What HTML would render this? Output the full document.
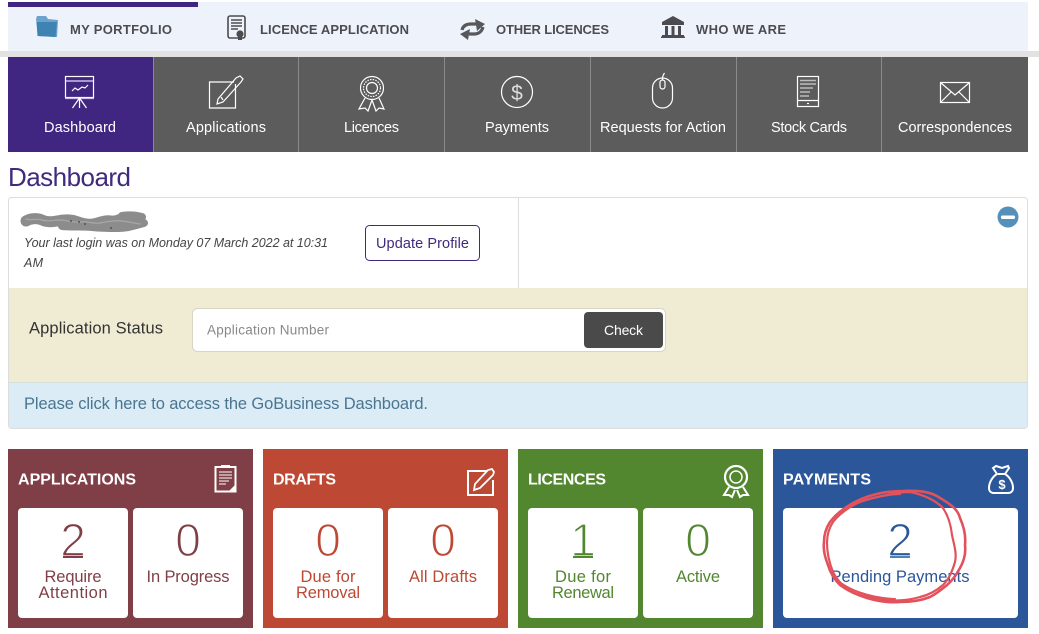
<!DOCTYPE html>
<html><head><meta charset="utf-8"><title>Dashboard</title>
<style>
html,body{margin:0;padding:0;background:#fff;width:1039px;height:634px;overflow:hidden}
svg{display:block;font-family:"Liberation Sans",sans-serif}
.top{font-size:13px;font-weight:bold;fill:#4c4c50}
.nav{font-size:14.500px;fill:#fff}
.i{fill:none;stroke:#fff;stroke-width:1.2}
.h{font-size:16px;font-weight:bold;fill:#fff}
.n{font-size:46px;text-anchor:middle;stroke:#fff;stroke-width:1.3}
.l{font-size:16.500px;text-anchor:middle}
</style></head><body>
<svg width="1039" height="634" viewBox="0 0 1039 634" xmlns="http://www.w3.org/2000/svg">
<rect width="1039" height="634" fill="#fff"/>
<!-- top bar -->
<rect x="8" y="2" width="1020" height="49" fill="#eef3fb"/>
<rect x="8" y="2" width="190" height="5" fill="#412681"/>
<rect x="0" y="51" width="1039" height="6" fill="#e2e2e2"/>
<path d="M36 19l1-3h9l2 3 10 1-1 17-19-1z" fill="#6aa3cb"/>
<path d="M36.500 22l20.500 0-1.500 15-18-1z" fill="#3f83b2"/>
<text class="top" x="70" y="34" textLength="102">MY PORTFOLIO</text>
<rect x="228" y="16" width="17" height="22" rx="2" fill="none" stroke="#4c4c50" stroke-width="1.6"/>
<path d="M231 20h11M231 23h11M231 26h11M231 29h7" stroke="#4c4c50" stroke-width="1.4"/>
<circle cx="240" cy="34" r="3.6" fill="#4c4c50"/><rect x="238" y="36" width="4" height="4" fill="#4c4c50"/>
<text class="top" x="260" y="34" textLength="149">LICENCE APPLICATION</text>
<path d="M462 30c1-4 4-6 9-6h5M483 27c-1 4-4 7-9 7h-5" fill="none" stroke="#58585c" stroke-width="3.200"/>
<path d="M475 19l10 5-8 7zM470 29l-10 5 8 6z" fill="#58585c"/>
<text class="top" x="496" y="34" textLength="113">OTHER LICENCES</text>
<path d="M673 16l11 6v1h-22v-1z" fill="#4c4c50"/>
<rect x="662" y="23" width="22" height="2" fill="#4c4c50"/>
<path d="M665 26h3v9h-3zM671.500 26h3v9h-3zM678 26h3v9h-3z" fill="#4c4c50"/>
<rect x="662" y="35" width="22" height="2" fill="#4c4c50"/>
<rect x="661" y="36.500" width="24" height="1.500" fill="#4c4c50"/>
<text class="top" x="696" y="34" textLength="90">WHO WE ARE</text>
<!-- nav -->
<rect x="8" y="57" width="1020" height="95" fill="#5c5c5c"/>
<rect x="8" y="57" width="145" height="95" fill="#412681"/>
<path d="M153.500 57v95M298.500 57v95M444.500 57v95M590.500 57v95M736.500 57v95M881.500 57v95" stroke="#8a8a8a" stroke-width="1"/>
<text class="nav" x="44" y="132" textLength="72">Dashboard</text>
<text class="nav" x="186" y="132" textLength="80">Applications</text>
<text class="nav" x="344" y="132" textLength="55">Licences</text>
<text class="nav" x="485" y="132" textLength="64">Payments</text>
<text class="nav" x="600" y="132" textLength="126">Requests for Action</text>
<text class="nav" x="771" y="132" textLength="76">Stock Cards</text>
<text class="nav" x="898" y="132" textLength="114">Correspondences</text>
<!-- nav icons -->
<g class="i">
<rect x="65.500" y="76.500" width="28" height="21"/>
<path d="M66 81h27" stroke="#c9bfe6" stroke-width="1.500"/>
<path d="M72 91l3-3 3 2 4-3 3 1 3-3"/>
<path d="M65 98.500h29" stroke="#c9bfe6"/>
<path d="M79.500 98v10M79.500 98l-7 10M79.500 98l7 10"/>
<path d="M234 82h-24.500v26h26v-24" />
<path d="M218 99l18-21 4-2 3 3-2 3-18 20-6 2z"/>
<path d="M221 97l2 3"/>
<circle cx="372" cy="88" r="11.500"/>
<circle cx="372" cy="88" r="8.500" stroke-dasharray="1.500 1.200"/>
<circle cx="372" cy="88" r="5.500"/>
<path d="M365 98l-6 11 6-1 3 3 4-11 4 11 3-3 5 1-5-11"/>
<circle cx="517" cy="92" r="15.500"/>
<text x="517" y="100" font-size="21" text-anchor="middle" fill="#ddd" stroke="none">$</text>
<rect x="652.500" y="78" width="20" height="30" rx="10"/>
<rect x="660" y="80" width="5" height="9" rx="2.500"/>
<path d="M662.500 80c0-3 0-4 2-7" />
<rect x="797.500" y="76.500" width="21" height="30"/>
<path d="M797.500 100.500h21" />
<path d="M800 80.500h16M800 84h16" stroke="#bbb" stroke-width="1.400"/>
<path d="M800 88h13M800 92h10M800 96h9" stroke="#ccc"/>
<path d="M807 103.500h2" stroke-width="1.200"/>
<rect x="940.500" y="82.500" width="29" height="20"/>
<path d="M941 83l14 12 14-12M941 102l10-10M969 102l-10-10"/>
</g>
<!-- heading -->
<text x="8" y="186" font-size="26" fill="#412a7d" textLength="123">Dashboard</text>
<!-- panel -->
<rect x="8.500" y="197.500" width="1019" height="231" rx="3" fill="#fff" stroke="#ddd"/>
<path d="M518.500 198v90" stroke="#ddd"/>
<rect x="9" y="288" width="1018" height="94" fill="#f0ecd4"/>
<path d="M9 382.500h1018" stroke="#d5dfdf"/>
<path d="M9 383h1018v43a2 2 0 0 1-2 2H11a2 2 0 0 1-2-2z" fill="#dcecf6"/>
<!-- smudge -->
<g fill="none" stroke-linecap="round" stroke-linejoin="round">
<path stroke="#8c8c8c" stroke-width="11" d="M26 221c5-3 12-3 16-1s10 2 15 1 12-2 18 0 12 4 18 3 12-4 18-3 10-3 15-3 8 0 12 2"/>
<path stroke="#8c8c8c" stroke-width="8" d="M62 226c10 1 20 0 30 1s16 1 26 1 14-2 26-5M122 216c6-1 12-1 20 1"/>
<path stroke="#a8a8a8" stroke-width="1.200" d="M26 219c6 2 10-1 16 1s12 0 18 0 14 3 20 2 14 2 20 1 14-3 22-2 12 2 18 3"/>
</g>
<path d="M70 221h2M78 222h2M84 224h2M110 228h2" stroke="#333" stroke-width="1"/>
<text x="24" y="247" font-size="12.500" font-style="italic" fill="#444" textLength="304">Your last login was on Monday 07 March 2022 at 10:31</text>
<text x="24" y="267" font-size="12.500" font-style="italic" fill="#444" textLength="19">AM</text>
<rect x="365.500" y="225.500" width="114" height="35" rx="4" fill="#fff" stroke="#412a7d"/>
<text x="376" y="248" font-size="14.500" fill="#412a7d" textLength="93">Update Profile</text>
<circle cx="1008" cy="217" r="10.500" fill="#5590bb"/>
<rect x="1001" y="215.500" width="14" height="3.500" rx="1.500" fill="#fff"/>
<text x="29" y="333.500" font-size="16.500" fill="#333" textLength="134">Application Status</text>
<rect x="192.500" y="308.500" width="473" height="43" rx="5" fill="#fff" stroke="#d8d5c5"/>
<text x="207" y="334.500" font-size="13.500" fill="#888" textLength="122">Application Number</text>
<rect x="584" y="312" width="79" height="36" rx="4" fill="#4a4a4a"/>
<text x="604" y="335" font-size="14" fill="#fff" textLength="39">Check</text>
<text x="24" y="409" font-size="16.500" fill="#4a7590" textLength="404">Please click here to access the GoBusiness Dashboard.</text>
<!-- cards -->
<rect x="8" y="449" width="245" height="179" fill="#803f46"/>
<rect x="263" y="449" width="245" height="179" fill="#bd4833"/>
<rect x="518" y="449" width="245" height="179" fill="#52862f"/>
<rect x="773" y="449" width="255" height="179" fill="#2b5699"/>
<g fill="#fff">
<rect x="18" y="508" width="110" height="110" rx="4"/><rect x="133" y="508" width="110" height="110" rx="4"/>
<rect x="273" y="508" width="110" height="110" rx="4"/><rect x="388" y="508" width="110" height="110" rx="4"/>
<rect x="528" y="508" width="110" height="110" rx="4"/><rect x="643" y="508" width="110" height="110" rx="4"/>
<rect x="783" y="508" width="235" height="110" rx="4"/>
</g>
<text class="h" x="18" y="484.500" textLength="118">APPLICATIONS</text>
<text class="h" x="273" y="484.500" textLength="63">DRAFTS</text>
<text class="h" x="528" y="484.500" textLength="78">LICENCES</text>
<text class="h" x="783" y="484.500" textLength="88">PAYMENTS</text>
<!-- numbers -->
<g fill="#803f46">
<text class="n" x="73" y="556">2</text><rect x="63" y="556" width="20" height="2"/>
<text class="n" x="188" y="556">0</text>
<text class="l" x="73" y="582" textLength="57">Require</text>
<text class="l" x="73" y="598" textLength="69">Attention</text>
<text class="l" x="188" y="582" textLength="83">In Progress</text>
</g>
<g fill="#bd4833">
<text class="n" x="328" y="556">0</text>
<text class="n" x="443" y="556">0</text>
<text class="l" x="328" y="582" textLength="55">Due for</text>
<text class="l" x="328" y="598" textLength="64">Removal</text>
<text class="l" x="443" y="582" textLength="68">All Drafts</text>
</g>
<g fill="#52862f">
<text class="n" x="583" y="556">1</text><rect x="573" y="556" width="20" height="2"/>
<text class="n" x="698" y="556">0</text>
<text class="l" x="583" y="582" textLength="56">Due for</text>
<text class="l" x="583" y="598" textLength="62">Renewal</text>
<text class="l" x="698" y="582" textLength="44">Active</text>
</g>
<g fill="#2b5699">
<text class="n" x="900" y="556">2</text><rect x="890" y="556" width="20" height="2" fill="#4a84b5"/>
<text class="l" x="900" y="582" textLength="139">Pending Payments</text>
</g>
<!-- card icons -->
<rect x="215.500" y="467" width="20" height="24.500" fill="none" stroke="#fff" stroke-width="2"/>
<rect x="221" y="465" width="9" height="3" fill="#fff"/>
<path d="M219 472h13M219 475h13M219 478h13M219 481h10M219 484h7" stroke="#fff" stroke-width="1"/>
<path d="M229 491l6-6v6z" fill="#fff"/>
<path d="M487 471h-19v24h25v-15" fill="none" stroke="#fff" stroke-width="2"/>
<path d="M475 484l13-14 4-1 2 3-1 3-13 13-6 2z" fill="none" stroke="#fff" stroke-width="1.800"/>
<circle cx="736" cy="477" r="11" fill="none" stroke="#fff" stroke-width="2.200"/>
<circle cx="736" cy="477" r="6" fill="none" stroke="#fff" stroke-width="1.500"/>
<path d="M729 487l-5 8 5 0 3 2 3-7M743 487l5 8-5 0-3 2-3-7" fill="none" stroke="#fff" stroke-width="2"/>
<path d="M996 466l6 2 6-2 1 2-4 6c5 3 8 9 8 14 0 3-2 5-5 5h-14c-3 0-5-2-5-5 0-5 3-11 8-14l-4-6z" fill="none" stroke="#fff" stroke-width="2"/>
<path d="M998 474h8" stroke="#fff" stroke-width="2"/>
<text x="1002" y="489" font-size="13" font-weight="bold" fill="#fff" text-anchor="middle">$</text>
<!-- red scribble -->
<g fill="none" stroke="#e2525c" stroke-linecap="round" stroke-linejoin="round">
<path stroke-width="2.600" d="M853 503C868 495 885 491 903 491C920 490 932 492 940 498C952 505 958 510 960 518C964 527 966 536 965 545C966 553 964 561 960 568C956 575 953 580 947 585C941 590 936 594 930 597C920 601 910 602 900 602C888 603 877 601 867 598C857 595 848 591 840 585C834 579 830 572 828 565C825 557 823 550 824 542C824 535 826 528 830 522C836 514 844 508 853 503Z"/>
<path stroke-width="2.200" d="M910 492C925 495 935 500 943 508C949 517 951 526 952 535C954 545 957 553 955 562C952 572 949 579 943 585C936 591 929 595 920 597M827 543C827 535 829 528 833 522C839 514 848 508 857 503C867 499 877 497 887 495C895 493 903 492 910 492M827 543C827 552 829 562 833 572C838 582 845 588 853 592C864 597 876 599 887 600C898 601 910 600 920 597"/>
<path stroke-width="2" d="M845 510C860 500 880 495 900 494M832 575C845 590 870 598 895 599"/>
</g>
</svg>
</body></html>
